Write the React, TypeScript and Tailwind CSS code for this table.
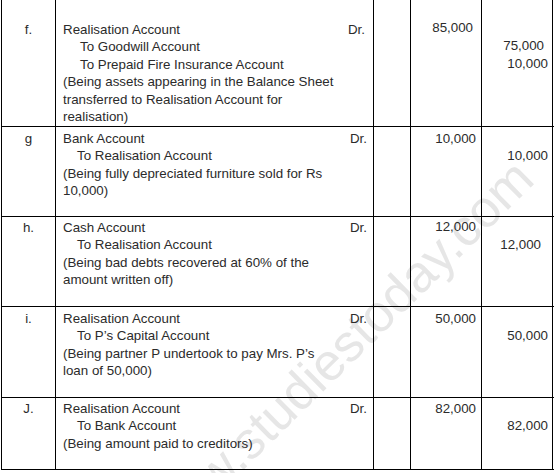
const cols = 'grid grid-cols-[54px_318px_37px_71px_71px] border-b border-black'
const cell = 'border-r border-black'

type Entry = {
  label: string
  height: string
  pad: string
  first: string
  indent: string
  to: string[]
  narration: string[]
  drPad: string
  debit: string
  debitPad: string
  credits: { value: string; pad: string }[]
}

const entries: Entry[] = [
  {
    label: 'f.',
    height: 'h-[127px]',
    pad: 'pt-[21px]',
    first: 'Realisation Account',
    indent: 'pl-[17px]',
    to: ['To Goodwill Account', 'To Prepaid Fire Insurance Account'],
    narration: [
      '(Being assets appearing in the Balance Sheet',
      'transferred to Realisation Account for',
      'realisation)',
    ],
    drPad: 'pr-[8px]',
    debit: '85,000',
    debitPad: 'pr-[8px] -mt-[2px]',
    credits: [
      { value: '75,000', pad: 'pr-[8px] -mt-[1px]' },
      { value: '10,000', pad: 'pr-[4px]' },
    ],
  },
  {
    label: 'g',
    height: 'h-[90px]',
    pad: 'pt-[3px]',
    first: 'Bank Account',
    indent: 'pl-[14px]',
    to: ['To Realisation Account'],
    narration: ['(Being fully depreciated furniture sold for Rs', '10,000)'],
    drPad: 'pr-[6px]',
    debit: '10,000',
    debitPad: 'pr-[5px]',
    credits: [{ value: '10,000', pad: 'pr-[4px]' }],
  },
  {
    label: 'h.',
    height: 'h-[90px]',
    pad: 'pt-[2px]',
    first: 'Cash Account',
    indent: 'pl-[14px]',
    to: ['To Realisation Account'],
    narration: ['(Being bad debts recovered at 60% of the', 'amount written off)'],
    drPad: 'pr-[6px]',
    debit: '12,000',
    debitPad: 'pr-[5px] -mt-[1px]',
    credits: [{ value: '12,000', pad: 'pr-[11px]' }],
  },
  {
    label: 'i.',
    height: 'h-[91px]',
    pad: 'pt-[3px]',
    first: 'Realisation Account',
    indent: 'pl-[14px]',
    to: ['To P’s Capital Account'],
    narration: ['(Being partner P undertook to pay Mrs. P’s', 'loan of 50,000)'],
    drPad: 'pr-[6px]',
    debit: '50,000',
    debitPad: 'pr-[5px]',
    credits: [{ value: '50,000', pad: 'pr-[4px]' }],
  },
  {
    label: 'J.',
    height: 'h-[72px]',
    pad: 'pt-[2px]',
    first: 'Realisation Account',
    indent: 'pl-[14px]',
    to: ['To Bank Account'],
    narration: ['(Being amount paid to creditors)'],
    drPad: 'pr-[6px]',
    debit: '82,000',
    debitPad: 'pr-[5px]',
    credits: [{ value: '82,000', pad: 'pr-[4px]' }],
  },
]

function EntryRow({ e }: { e: Entry }) {
  return (
    <div className={`${cols} ${e.height}`}>
      <div className={`${cell} ${e.pad} text-center`}>{e.label}</div>
      <div className={`${cell} ${e.pad} pl-[7px] whitespace-nowrap`}>
        <div className={`flex justify-between ${e.drPad}`}>
          <span>{e.first}</span>
          <span>Dr.</span>
        </div>
        {e.to.map((t) => (
          <div key={t} className={e.indent}>
            {t}
          </div>
        ))}
        {e.narration.map((n) => (
          <div key={n}>{n}</div>
        ))}
      </div>
      <div className={cell} />
      <div className={`${cell} ${e.pad} text-right`}>
        <div className={e.debitPad}>{e.debit}</div>
      </div>
      <div className={`${cell} ${e.pad} text-right`}>
        <div className="h-[17.4px]" />
        {e.credits.map((c) => (
          <div key={c.value + c.pad} className={c.pad}>
            {c.value}
          </div>
        ))}
      </div>
    </div>
  )
}

export default function App() {
  return (
    <div className="relative w-[554px] h-[473px] overflow-hidden bg-white font-['Liberation_Sans',Arial,sans-serif] text-[13.33px] leading-[17.4px] text-[#2b2b2b]">
      {/* watermark */}
      <div className="absolute left-[162px] top-[506px] origin-[0_44px] -rotate-[44.5deg] whitespace-nowrap text-[52px] leading-none text-[#e6e6e6] pointer-events-none">
        www.studiestoday.com
      </div>

      <div className="relative ml-[1px] border-l border-black">
        {entries.map((e) => (
          <EntryRow key={e.label} e={e} />
        ))}
      </div>
    </div>
  )
}
